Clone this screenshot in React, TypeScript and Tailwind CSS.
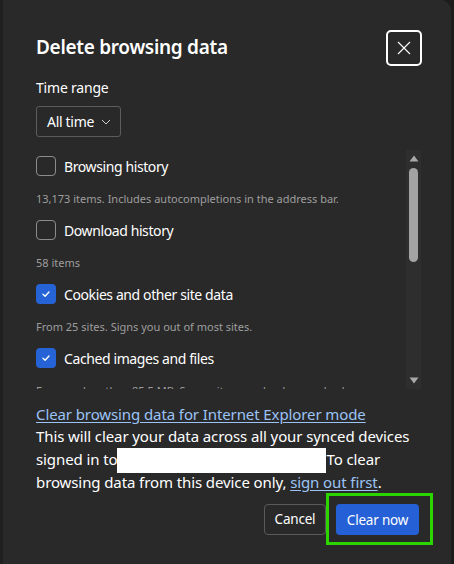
import React from "react";

// ── Delete browsing data dialog ──────────────────────────────

type Item = { label: string; desc: string; checked: boolean };

const items: Item[] = [
  { label: "Browsing history", desc: "13,173 items. Includes autocompletions in the address bar.", checked: false },
  { label: "Download history", desc: "58 items", checked: false },
  { label: "Cookies and other site data", desc: "From 25 sites. Signs you out of most sites.", checked: true },
  { label: "Cached images and files", desc: "Frees up less than 85.5 MB. Some sites may load more slowly on your next visit.", checked: true },
];

function CheckBox({ checked }: { checked: boolean }) {
  if (checked) {
    return (
      <span className="flex h-5 w-5 shrink-0 items-center justify-center rounded-[4px] bg-[#2563d6]">
        <svg width="10" height="10" viewBox="0 0 10 10" fill="none">
          <path d="M2 5.2 L4.1 7.2 L8 3" stroke="#fff" strokeWidth="1.3" strokeLinecap="round" strokeLinejoin="round" />
        </svg>
      </span>
    );
  }
  return <span className="h-5 w-5 shrink-0 rounded-[4px] border border-[#8c8c8c]" />;
}

function ScrollTrack() {
  return (
    <div className="flex w-[15px] shrink-0 flex-col items-center bg-[#2e2e2e] pt-[5px] pb-[5px]">
      <svg width="10" height="7" viewBox="0 0 10 7">
        <path d="M5 0.5 L9.5 6.5 L0.5 6.5 Z" fill="#a8a8a8" />
      </svg>
      <div className="mt-[6px] h-[94px] w-[9px] rounded-full bg-[#a3a3a3]" />
      <div className="flex-1" />
      <svg width="10" height="7" viewBox="0 0 10 7">
        <path d="M0.5 0.5 L9.5 0.5 L5 6.5 Z" fill="#a8a8a8" />
      </svg>
    </div>
  );
}

export default function App() {
  return (
    <div
      className="flex h-[564px] w-[454px] overflow-hidden bg-[#1c1c1c] text-white"
      style={{ fontFamily: '"Noto Sans", "Open Sans", sans-serif' }}
    >
      <div className="w-[3px] shrink-0 bg-[#202020]" />

      <div className="flex w-[448px] shrink-0 flex-col rounded-tr-[10px] bg-[#292929] pl-[33px]">
        {/* Header */}
        <div className="flex items-start pt-[30px] pr-[29px]">
          <h1 className="mt-[2px] flex-1 text-[19px] font-semibold leading-[30px] tracking-[-0.3px]">Delete browsing data</h1>
          <button className="flex h-9 w-9 items-center justify-center rounded-[5px] border-2 border-white">
            <svg width="14" height="14" viewBox="0 0 14 14" fill="none">
              <path d="M1 1 L13 13 M13 1 L1 13" stroke="#fff" strokeWidth="1.1" />
            </svg>
          </button>
        </div>

        {/* Time range */}
        <div className="mt-[12px] text-[14px] leading-5 tracking-[-0.2px]">Time range</div>
        <div className="mt-[8px]">
          <button className="flex h-[31px] items-center gap-[7px] rounded-[3px] border border-[#5c5c5c] pl-[10px] pr-[9px] text-[14px] tracking-[-0.3px]">
            All time
            <svg width="10" height="6" viewBox="0 0 10 6" fill="none">
              <path d="M1 1 L5 5 L9 1" stroke="#cfcfcf" strokeWidth="1" />
            </svg>
          </button>
        </div>

        {/* Scrollable list */}
        <div className="mt-[13px] flex h-[239px] pr-[30px]">
          <div className="flex-1 overflow-hidden pt-[6px]">
            {items.map((it) => (
              <div key={it.label} className="mb-[13px]">
                <div className="flex h-5 items-center gap-[8px]">
                  <CheckBox checked={it.checked} />
                  <span className="whitespace-nowrap text-[14px] tracking-[-0.4px]">{it.label}</span>
                </div>
                <p className="mt-[15px] whitespace-nowrap text-[11px] leading-4 text-[#9e9e9e]">{it.desc}</p>
              </div>
            ))}
          </div>
          <ScrollTrack />
        </div>

        {/* Footer text */}
        <div className="mt-[14px] pr-[30px] text-[15px] leading-[22.3px] tracking-[-0.1px]">
          <a className="text-[#9cc3f5] underline underline-offset-2">Clear browsing data for Internet Explorer mode</a>
          <p>
            This will clear your data across all your synced devices signed in to
            <span className="-my-[2px] inline-block h-[25px] w-[209px] bg-white align-middle" />
            To clear browsing data from this device only,{" "}
            <a className="text-[#9cc3f5] underline underline-offset-2">sign out first</a>.
          </p>
        </div>

        {/* Actions */}
        <div className="flex items-center justify-end pr-[18px]">
          <button className="h-[31px] w-[62px] rounded-[4px] border border-[#5a5a5a] text-[13.5px] tracking-[-0.2px]">Cancel</button>
          <div className="border-[3px] border-[#2bd600] pt-[8px] pr-[11px] pb-[7px] pl-[7px]">
            <button className="h-[31px] w-[83px] rounded-[4px] bg-[#2560d6] text-[13.5px] tracking-[-0.2px]">Clear now</button>
          </div>
        </div>
      </div>

      <div className="flex-1 bg-[#1c1c1c]" />
    </div>
  );
}
